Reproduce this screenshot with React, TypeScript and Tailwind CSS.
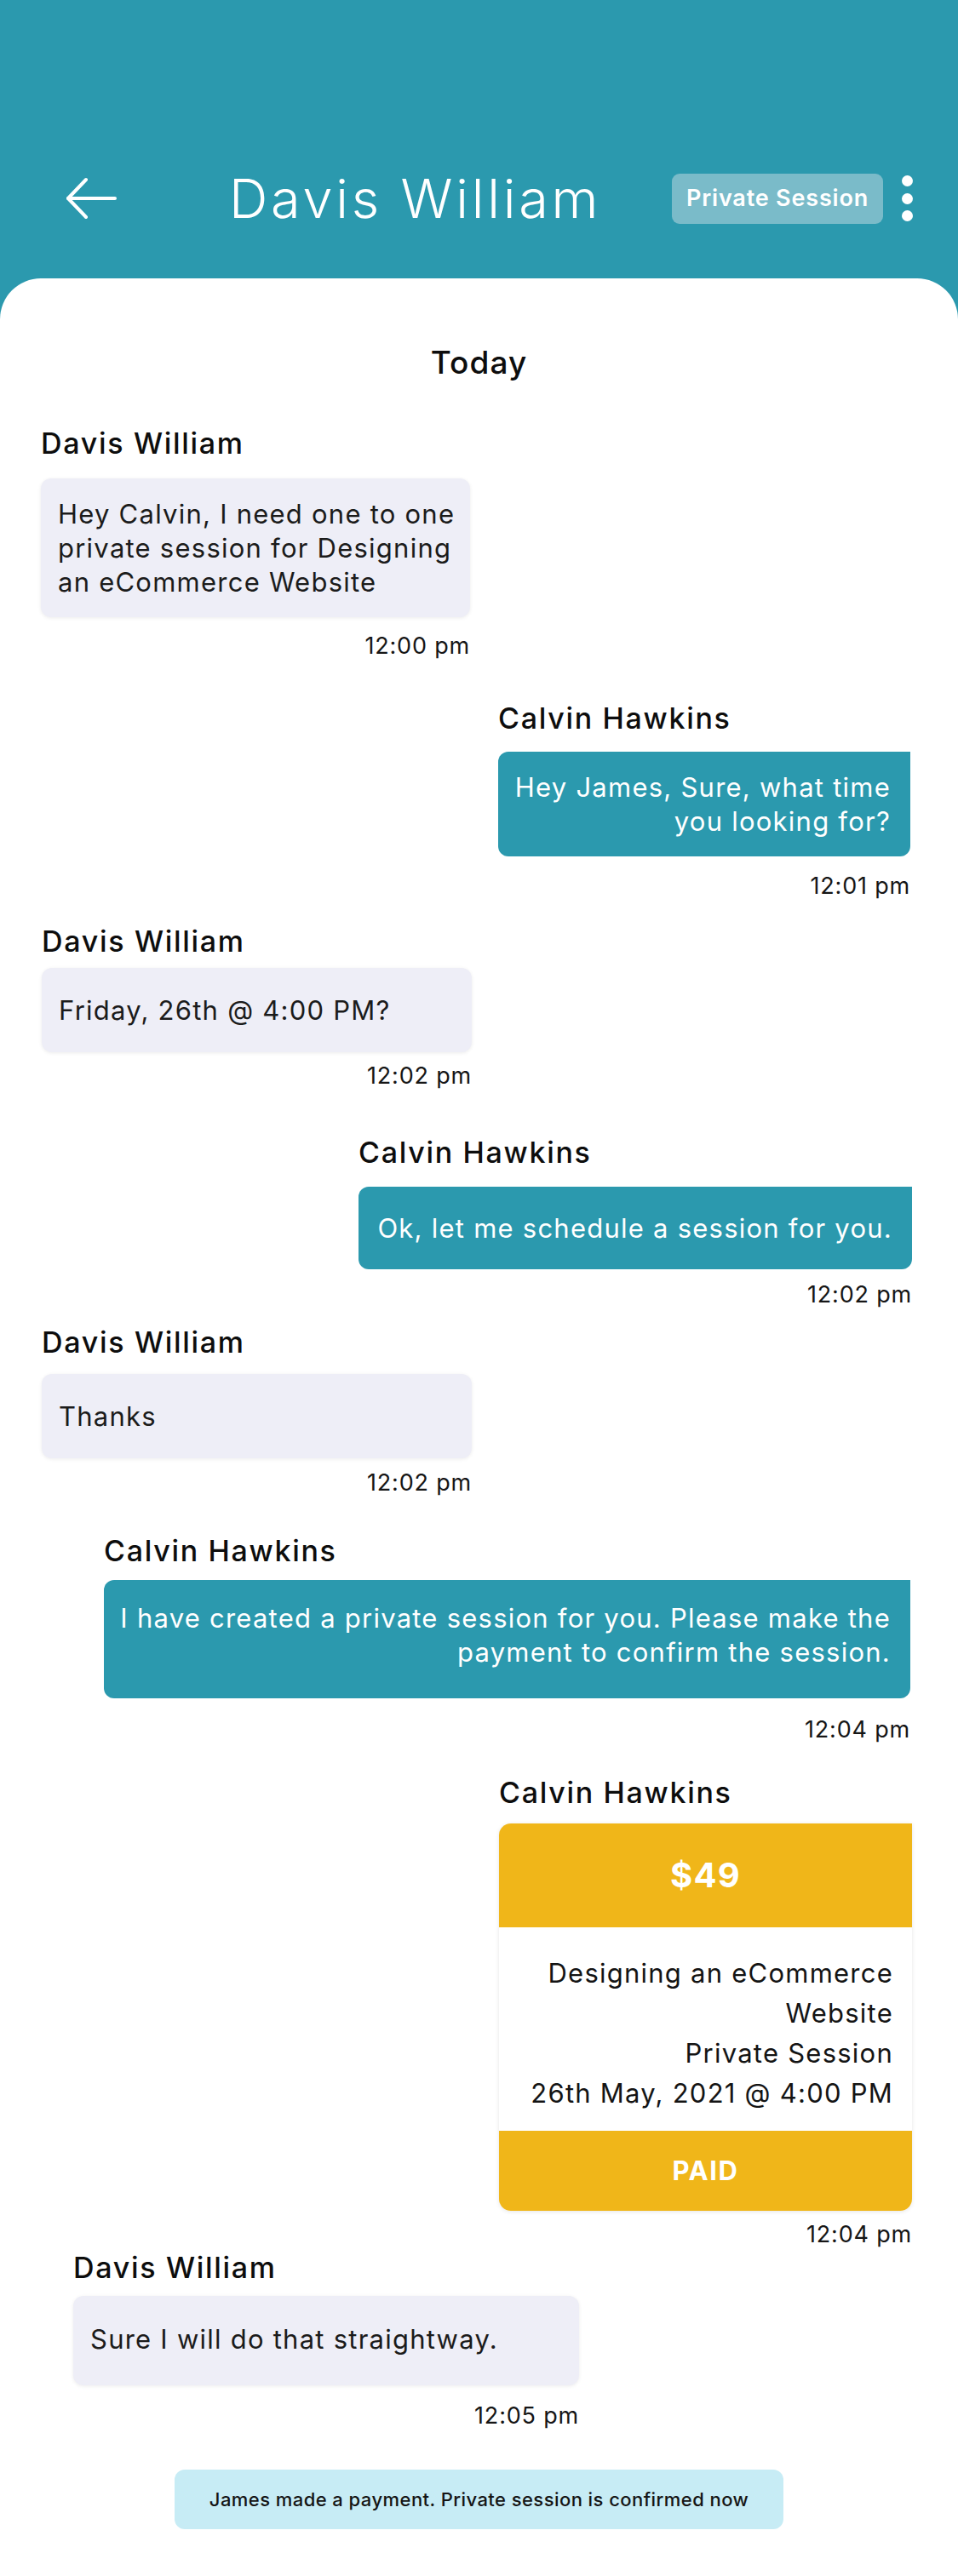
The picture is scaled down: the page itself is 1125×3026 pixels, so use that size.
import React from 'react';

type Msg = {
  side: 'left' | 'right';
  name: string;
  text: string;
  time: string;
  wrap: string;
  mt: string;
  nameGap: string;
  timeGap: string;
  bubble: string;
};

const messages: Msg[] = [
  {
    side: 'left',
    name: 'Davis William',
    text: 'Hey Calvin, I need one to one private session for Designing an eCommerce Website',
    time: '12:00 pm',
    wrap: 'self-start ml-[48px] w-[504px]',
    mt: 'mt-[53px]',
    nameGap: 'mb-[21px]',
    timeGap: 'mt-[18px]',
    bubble: 'min-h-[163px] py-[20px]',
  },
  {
    side: 'right',
    name: 'Calvin Hawkins',
    text: 'Hey James, Sure, what time you looking for?',
    time: '12:01 pm',
    wrap: 'self-end mr-[56px] w-[484px]',
    mt: 'mt-[49px]',
    nameGap: 'mb-[19px]',
    timeGap: 'mt-[19px]',
    bubble: 'min-h-[123px] py-[20px]',
  },
  {
    side: 'left',
    name: 'Davis William',
    text: 'Friday, 26th @ 4:00 PM?',
    time: '12:02 pm',
    wrap: 'self-start ml-[49px] w-[505px]',
    mt: 'mt-[29px]',
    nameGap: 'mb-[11px]',
    timeGap: 'mt-[12px]',
    bubble: 'min-h-[99px] py-[20px]',
  },
  {
    side: 'right',
    name: 'Calvin Hawkins',
    text: 'Ok, let me schedule a session for you.',
    time: '12:02 pm',
    wrap: 'self-end mr-[54px] w-[650px]',
    mt: 'mt-[54px]',
    nameGap: 'mb-[20px]',
    timeGap: 'mt-[14px]',
    bubble: 'min-h-[97px] py-[20px]',
  },
  {
    side: 'left',
    name: 'Davis William',
    text: 'Thanks',
    time: '12:02 pm',
    wrap: 'self-start ml-[49px] w-[505px]',
    mt: 'mt-[20px]',
    nameGap: 'mb-[17px]',
    timeGap: 'mt-[13px]',
    bubble: 'min-h-[99px] py-[20px]',
  },
  {
    side: 'right',
    name: 'Calvin Hawkins',
    text: 'I have created a private session for you. Please make the payment to confirm the session.',
    time: '12:04 pm',
    wrap: 'self-end mr-[56px] w-[947px]',
    mt: 'mt-[44px]',
    nameGap: 'mb-[14px]',
    timeGap: 'mt-[21px]',
    bubble: 'pt-[25px] pb-[34px]',
  },
];

const lastMsg: Msg = {
  side: 'left',
  name: 'Davis William',
  text: 'Sure I will do that straightway.',
  time: '12:05 pm',
  wrap: 'self-start ml-[86px] w-[594px]',
  mt: 'mt-[3px]',
  nameGap: 'mb-[13px]',
  timeGap: 'mt-[20px]',
  bubble: 'min-h-[105px] pt-[18px] pb-[22px]',
};

const nameCls = 'text-[34px] leading-[40px] font-medium tracking-[0.05em] text-[#0d0d0d]';
const timeCls = 'text-right text-[27px] leading-[32px] tracking-[0.03em] text-[#161616]';

function Message({ m }: { m: Msg }) {
  const left = m.side === 'left';
  return (
    <div className={`flex flex-col ${m.wrap} ${m.mt}`}>
      <div className={`${nameCls} ${m.nameGap}`}>{m.name}</div>
      <div
        className={`flex flex-col justify-center text-[31px] leading-[40px] tracking-[0.04em] ${m.bubble} ${
          left
            ? 'rounded-[12px] bg-[#eeeef7] pl-[20px] pr-[10px] text-left text-[#1b1b1b] shadow-[0_1px_4px_rgba(0,0,0,0.08)]'
            : 'rounded-[12px] rounded-tr-none bg-[#2b99ae] pl-[10px] pr-[23px] text-right text-white'
        }`}
      >
        {m.text}
      </div>
      <div className={`${timeCls} ${m.timeGap}`}>{m.time}</div>
    </div>
  );
}

function SessionCard() {
  return (
    <div className="self-end mr-[54px] mt-[38px] flex w-[485px] flex-col">
      <div className={`${nameCls} mb-[16px]`}>Calvin Hawkins</div>
      <div className="overflow-hidden rounded-[14px] rounded-tr-none bg-white shadow-[0_1px_5px_rgba(0,0,0,0.1)]">
        <div className="flex h-[122px] items-center justify-center bg-[#f0b619] text-[40px] font-bold tracking-[0.03em] text-white">
          $49
        </div>
        <div className="pl-[22px] pr-[22px] pt-[30px] pb-[21px] text-right text-[31px] leading-[47px] tracking-[0.04em] text-[#141414]">
          <div>Designing an eCommerce Website</div>
          <div>Private Session</div>
          <div>26th May, 2021 @ 4:00 PM</div>
        </div>
        <div className="flex h-[94px] items-center justify-center bg-[#f0b619] text-[31px] font-bold tracking-[0.05em] text-white">
          PAID
        </div>
      </div>
      <div className={`${timeCls} mt-[12px]`}>12:04 pm</div>
    </div>
  );
}

export default function App() {
  return (
    <div className="min-h-[3026px] w-[1125px] bg-[#2b99ae] [font-family:Inter,'Noto_Sans',sans-serif]">
      <header className="pt-[201px] pb-[62px]">
        <div className="flex h-[64px] items-center">
          <svg
            className="ml-[76px] shrink-0"
            width="62"
            height="50"
            viewBox="0 0 62 50"
            fill="none"
            stroke="white"
            strokeWidth="4"
            strokeLinecap="round"
            strokeLinejoin="round"
          >
            <path d="M4 25 H59" />
            <path d="M25 3 L4 25 L25 47" />
          </svg>
          <h1 className="ml-[131px] text-[63px] font-light leading-[64px] tracking-[0.06em] text-white">
            Davis William
          </h1>
          <span className="ml-auto flex h-[59px] w-[248px] items-center justify-center rounded-[9px] bg-[#7abbc9] text-[27px] font-semibold tracking-[0.03em] text-white">
            Private Session
          </span>
          <div className="ml-[22px] mr-[53px] flex flex-col gap-[7.5px]">
            <span className="block h-[13px] w-[13px] rounded-full bg-white" />
            <span className="block h-[13px] w-[13px] rounded-full bg-white" />
            <span className="block h-[13px] w-[13px] rounded-full bg-white" />
          </div>
        </div>
      </header>

      <main className="flex min-h-[2699px] flex-col rounded-t-[48px] bg-white pt-[77px] pb-[55px]">
        <div className="text-center text-[37px] font-medium leading-[44px] tracking-[0.03em] text-[#0d0d0d]">
          Today
        </div>

        {messages.map((m, i) => (
          <Message key={i} m={m} />
        ))}

        <SessionCard />

        <Message m={lastMsg} />

        <div className="mt-[47px] flex h-[70px] w-[715px] items-center justify-center self-center rounded-[12px] bg-[#c7ecf5] text-[22px] font-medium tracking-[0.02em] text-[#151515]">
          James made a payment. Private session is confirmed now
        </div>
      </main>
    </div>
  );
}
